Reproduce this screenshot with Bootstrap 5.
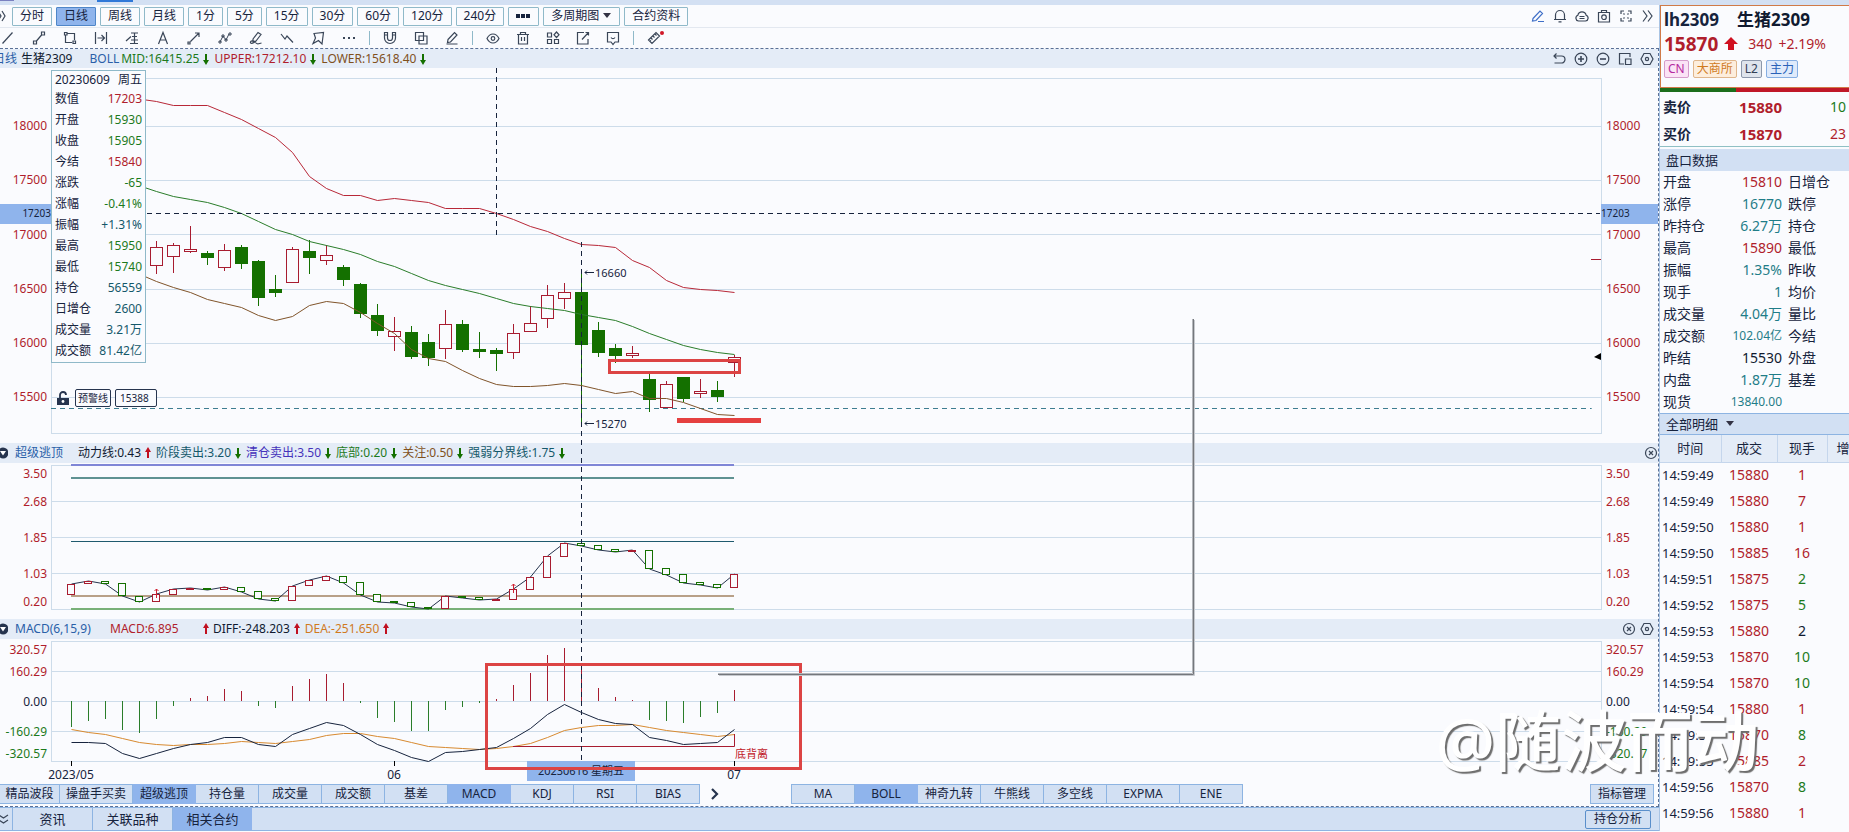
<!DOCTYPE html>
<html lang="zh-CN">
<head>
<meta charset="utf-8">
<meta name="viewport" content="width=device-width, initial-scale=1">
<title>生猪2309 日线</title>
<link href="https://cdn.jsdelivr.net/npm/bootstrap@5.3.0/dist/css/bootstrap.min.css" rel="stylesheet">
<style>
:root{--up:#b01e2c;--down:#1c7a1c;--teal:#1f7d88;--ink:#16233d;--edge:#8db4e2;--pale:#d2e0f3;--sel:#8fb4ec;--bar:#e4ecf7}
body{font-family:"Noto Sans","Noto Sans CJK SC",sans-serif;font-size:12px;line-height:16px;background:#fafbfe;color:var(--ink);overflow:hidden}
button{font-size:inherit;line-height:inherit;color:inherit;background:none;border:0;padding:0;white-space:nowrap}
svg{display:block;flex:none}
.ico{width:14px;height:14px;fill:none;stroke:#3a4658;stroke-width:1.2;overflow:visible}
.c-up{color:var(--up)}.c-down{color:var(--down)}.c-teal{color:var(--teal)}.c-blue{color:#2a5fa8}
.c-brown{color:#80501c}.c-violet{color:#4433bb}.c-deep{color:#14586a}.c-orange{color:#d07a1e}.c-ink{color:#101a30}
.topstrip{height:5px;background:#d3e0f3}
.topstrip i{width:36px;height:2px;background:#2f78d8}
.topstrip i:first-child{width:14px;height:1px;margin-right:83px;background:#7a80c0}
.periods{height:23px;border-bottom:1px solid #e3e8f0}
.period{height:19px;border:1px solid #8fb9c9;border-radius:1px;padding:0 7px}
.period.on{background:var(--sel);border-color:#4f86c8}
.tools{height:20px;padding-left:1px}
.tools .split{width:1px;height:14px;background:#8fb9c9;margin:0 13px}
.g31{gap:17px}.g30{gap:16px}
.work{border:1px dashed #5a7096;border-left:0;padding-bottom:2px}
.infobar{height:20px;background:var(--bar);white-space:nowrap}
.work>.infobar:first-child{height:19px}
.infobar .item{display:flex;align-items:center;gap:4px;margin-right:5px}
.infobar .arrow{width:6px;height:12px}
.infobar .icons{gap:8px}
.head1{overflow:hidden}
.head1 .freq{margin-left:-7px;margin-right:4px}
.head1 .symbol{margin-right:17px}
.head1 .study{margin-right:2px}
.wname{margin-left:7px;margin-right:15px}
.wname.wide{width:80px}
.macdval{width:93px}
.fold{width:8px;height:12px;overflow:hidden}
.p-main{height:375px}.p-esc{height:156px}.p-macd{height:145px}
.plot{width:100%}
.plot text{font-size:12px}
.overlay{position:absolute;left:0;top:0;width:100%;height:100%;pointer-events:none}
.tip{position:absolute;left:51px;top:21px;width:95px;background:#fafbfe;border:1px solid #8fb9c9;padding:0 3px 1px}
.tip .day{height:17px}
.tip dl{margin:0}
.tip dl div{height:21px}
.tip dt{font-weight:400}.tip dd{margin:0}
.alarm{position:absolute;left:57px;top:340px;height:18px;gap:4px;font-size:10px;line-height:14px}
.alarm button,.alarm input{height:18px;border:1px solid #26344e;border-radius:2px;background:#fafbfe;color:var(--ink)}
.alarm button{width:36px}
.alarm input{width:42px;padding:0 4px;font-size:10px}
.tabs{height:20px}
.tab{height:20px;width:63px;background:var(--pale);border:1px solid var(--edge);border-left:0}
.tab.first{border-left:1px solid var(--edge);width:64px}
.tab.on{background:var(--sel);border-color:var(--sel)}
.tab.w60{width:60px}.tab.w73{width:73px}
.tab.manage{width:64px;border-left:1px solid var(--edge);margin-right:4px}
.pager{width:91px;padding-left:11px}
.dock{height:24px;background:var(--pale);border-top:1px solid var(--edge);border-bottom:1px solid var(--edge);font-size:13px}
.dock .dtab{width:80px;height:22px;border-left:1px solid var(--edge)}
.dock .dtab.on{background:var(--sel)}
.dock .analyse{font-size:12px;height:19px;width:66px;border:1px solid #5a8fcb;border-radius:2px;margin-right:8px}
.chevs{width:12px}
.quote{width:190px;border-left:1px solid #a9c4e4;overflow:hidden;flex:none;font-size:14px;line-height:20px}
.card-q{border:1px solid #d07a48;border-right:0;height:83px;padding:3px 0 0 3px}
.name{font-size:17px;line-height:22px;font-weight:700;gap:18px}
.last{gap:6px;height:26px}
.last b{font-size:19px;line-height:24px}
.tags{gap:4px;padding-top:3px}
.tagx{font-size:12px;line-height:16px;height:18px;border:1px solid;border-radius:2px;padding:0 3px}
.t1{color:#b52aa0;background:#fbe3f6;border-color:#d59ccb}.t2{color:#d07a1e;background:#fdeedd;border-color:#dfb68c}
.t3{color:#334056;background:#dfe4ec;border-color:#8c97aa}.t4{color:#2a62b8;background:#dfeafb;border-color:#86aee2}
.ratio{height:4px;background:#c01828}
.ratio div{height:4px;background:#1c6e1c}
.ask{height:27px;padding:0 3px}
.ask b{flex:none}
.ask .px{width:91px;text-align:right;font-size:15px}
.asks{border-bottom:1px solid #8fc0c4;padding-top:1px;height:55px;margin-bottom:2px}
.sect{height:22px;background:var(--pale);font-size:13px;padding-left:6px}
.sect.lined{border-top:1px solid var(--edge);border-bottom:1px solid var(--edge)}
.facts{width:100%;table-layout:fixed}
.facts td,.facts th{height:22px;padding:0;font-weight:400;white-space:nowrap}
.facts tr>*:nth-child(1){width:58px;padding-left:3px}
.facts tr>*:nth-child(2){width:64px;text-align:right}
.facts tr>*:nth-child(3){padding-left:6px}
.sm12{font-size:12px}
.ticks{width:100%;table-layout:fixed}
.ticks .ct{width:61px}.ticks .cp{width:56px}.ticks .cv{width:50px}
.ticks th{height:27px;background:var(--bar);font-weight:400;font-size:13px;text-align:center;padding:0;border-right:1px solid #c5d6ec;border-bottom:1px solid #c5d6ec}
.ticks th:last-child{text-align:left;padding-left:9px;border-right:0}
.ticks td{height:26px;padding:0;text-align:center}
.ticks td:first-child{text-align:left;padding-left:2px;font-size:13px}
.stamp{position:absolute;right:90px;bottom:54px;font-size:66px;line-height:76px;font-weight:500;color:#fff;text-shadow:2px 2px 1px #6d6d6d;pointer-events:none;white-space:nowrap}
</style>
</head>
<body>
<div class="position-relative min-vh-100">
<div class="topstrip d-flex"><i></i><i></i></div>
<div class="d-flex">
<main class="flex-grow-1 overflow-hidden">
  <div class="periods d-flex align-items-center">
    <svg class="ico chevs" viewBox="0 0 12 14"><path d="M-2 2l3 5-3 5M2 2l3 5-3 5"/></svg>
    <div class="d-flex gap-1">
      <button class="period">分时</button><button class="period on">日线</button><button class="period">周线</button><button class="period">月线</button><button class="period">1分</button><button class="period">5分</button><button class="period">15分</button><button class="period">30分</button><button class="period">60分</button><button class="period">120分</button><button class="period">240分</button>
      <button class="period d-flex align-items-center" aria-label="更多周期"><svg width="15" height="4"><path d="M0 0h4v4h-4zM5 0h4v4h-4zM10 0h4v4h-4z" fill="#16233d"/></svg></button>
      <button class="period d-flex align-items-center">多周期图<svg class="ms-1" width="9" height="6"><path d="M0 0h8l-4 5z" fill="#334"/></svg></button>
      <button class="period">合约资料</button>
    </div>
    <div class="d-flex ms-auto gap-2 pe-1">
      <button aria-label="编辑"><svg class="ico" style="stroke:#3f6fc8" viewBox="0 0 14 14"><path d="M2 9.500L9 2l2.500 2.500L5 11.500l-3.500.5zM7 12.500h6"/></svg></button>
      <button aria-label="提醒"><svg class="ico" viewBox="0 0 14 14"><path d="M1 10.500h12M2.500 10.500V6a4.500 4.500 0 0 1 9 0v4.500M5.500 12.800h3"/></svg></button>
      <button aria-label="云"><svg class="ico" viewBox="0 0 14 14"><path d="M3.500 12a3 3 0 0 1-.6-5.800 4.200 4.200 0 0 1 8.200 0A3 3 0 0 1 10.500 12zM4.500 7.500h5M4.500 9.500h5"/></svg></button>
      <button aria-label="截图"><svg class="ico" viewBox="0 0 14 14"><path d="M1.500 3.500h11v9.500h-11zM4.500 3.500v-2h5v2"/><circle cx="7" cy="8.200" r="2.300"/></svg></button>
      <button aria-label="全屏"><svg class="ico" viewBox="0 0 14 14"><path d="M2 5V2h3M9 2h3v3M12 9v3H9M5 12H2V9M4.500 4.500l1 1M9.500 4.500l-1 1M4.500 9.500l1-1M9.500 9.500l-1-1"/></svg></button>
      <button aria-label="展开"><svg class="ico" viewBox="0 0 14 14"><path d="M2 1.500l4 5.500-4 5.500M7 1.500l4 5.500-4 5.500"/></svg></button>
    </div>
  </div>
  <div class="tools d-flex align-items-center">
    <div class="d-flex g31">
      <button aria-label="直线"><svg class="ico" viewBox="0 0 14 14"><path d="M1.500 12.500l10-11"/></svg></button>
      <button aria-label="线段"><svg class="ico" viewBox="0 0 14 14"><path d="M4 10.500l6-7M1.500 10h3v3h-3zM9.500 1h3v3h-3z"/></svg></button>
      <button aria-label="矩形"><svg class="ico" viewBox="0 0 14 14"><path d="M4.500 2.500h7V9M2.500 4.500v7H9M1.500 1.500h2.500v2.500H1.500zM10 10h2.500v2.500H10z"/></svg></button>
      <button aria-label="测距"><svg class="ico" viewBox="0 0 14 14"><path d="M1.500 1v12M12.500 1v12M3.500 7h7M7.500 4l3 3-3 3"/></svg></button>
      <button aria-label="黄金分割"><svg class="ico" viewBox="0 0 14 14"><path d="M6 2h7M7 5.500h5M6 9h7M5 12.500h8M9.500 2v10.500M1 10l5-4.500"/></svg></button>
      <button aria-label="文字"><svg class="ico" viewBox="0 0 14 14"><path d="M2.500 13L7 1.500 11.500 13M4 9h6"/></svg></button>
      <button aria-label="射线"><svg class="ico" viewBox="0 0 14 14"><path d="M3.500 10.500L12 2M8 2h4v4M1 11h2v2H1z"/></svg></button>
      <button aria-label="折线"><svg class="ico" viewBox="0 0 14 14"><path d="M2 11l3-6 3 4 3-6M1 10h2v2H1zM4 4h2v2H4zM7 8h2v2H7zM11 2h2v2h-2z" stroke-width="1"/></svg></button>
      <button aria-label="画笔"><svg class="ico" viewBox="0 0 14 14"><path d="M4 8l5-6.500 3 2L7 10l-3 .5zM7 10c-3 3-6 3-5.500 1s4-1 5.500 1 3 .5 5.500 0"/></svg></button>
      <button aria-label="波浪"><svg class="ico" viewBox="0 0 14 14"><path d="M1 3l4 5 2-3 6 6.500"/></svg></button>
      <button aria-label="形态"><svg class="ico" viewBox="0 0 14 14"><path d="M3 2.500L12.500 1.500 11 13 7.500 9.500 2 12.500 4.500 7z"/></svg></button>
      <button aria-label="更多"><svg class="ico" viewBox="0 0 14 14"><path stroke-width="2" d="M1 7h2M6 7h2M11 7h2"/></svg></button>
    </div>
    <span class="split"></span>
    <div class="d-flex g31">
      <button aria-label="磁吸"><svg class="ico" viewBox="0 0 14 14"><path d="M1.500 1.500h3V7a2.500 2.500 0 0 0 5 0V1.500h3V7a5.500 5.500 0 0 1-11 0zM1.500 4h3M9.500 4h3"/></svg></button>
      <button aria-label="复制"><svg class="ico" viewBox="0 0 14 14"><path d="M1.500 1.500h8v8h-8zM5 5h8v8H5z"/></svg></button>
      <button aria-label="铅笔"><svg class="ico" viewBox="0 0 14 14"><path d="M3 8.500L9.500 1.500l2.500 2.500-6.500 7-3 .5zM1.500 13h11"/></svg></button>
    </div>
    <span class="split"></span>
    <div class="d-flex g30">
      <button aria-label="显示"><svg class="ico" viewBox="0 0 14 14"><path d="M1 7.500c3-6 9-6 12 0-3 6-9 6-12 0z"/><circle cx="7" cy="7.500" r="1.800"/></svg></button>
      <button aria-label="删除"><svg class="ico" viewBox="0 0 14 14"><path d="M1 3.500h12M4.500 3.500v-2h5v2M2.500 3.500V13h9V3.500M5.500 6v4M8.500 6v4"/></svg></button>
      <button aria-label="组件"><svg class="ico" viewBox="0 0 14 14"><path d="M1.500 2h4v4h-4zM1.500 8.500h4v4h-4zM8.500 8.500h4v4h-4zM10.500 1l2.500 2.800-2.500 2.700L8 3.800z"/></svg></button>
      <button aria-label="导出"><svg class="ico" viewBox="0 0 14 14"><path d="M8 1.500H1.500V13H12V8M6 8.500l6-6.500M9.500 1.500h3v3"/></svg></button>
      <button aria-label="消息"><svg class="ico" viewBox="0 0 14 14"><path d="M1.500 1.500h11V11H9l-2 2.500L5 11H1.500zM5 6.500c1 1.500 3 1.500 4 0"/></svg></button>
    </div>
    <span class="split"></span>
    <button aria-label="测量"><svg class="ico" viewBox="0 0 14 14"><path d="M1.500 9L9 1.500l3.500 3.500L5 12.500zM4 7l1.500 1.500M6 5l1.500 1.500M8 3l1.500 1.500M3 9.500l1 1"/><circle cx="15" cy="2" r="2" fill="#d01828" stroke="none"/></svg></button>
  </div>

  <section class="work position-relative" aria-label="行情图">
    <div class="infobar head1 d-flex align-items-center">
      <span class="freq c-blue">日线</span><span class="symbol c-ink">生猪2309</span><span class="study c-blue">BOLL</span>
      <span class="item c-down" data-arrow="down">MID:16415.25</span><span class="item c-up" data-arrow="down">UPPER:17212.10</span><span class="item c-brown" data-arrow="down">LOWER:15618.40</span>
      <div class="icons d-flex ms-auto pe-1">
        <button aria-label="撤销"><svg class="ico" viewBox="0 0 14 14"><path d="M4.500 1.500L2 4l2.500 2.500M2 4h7.500a3.500 3.500 0 0 1 0 7H2.500"/></svg></button>
        <button aria-label="放大"><svg class="ico" viewBox="0 0 14 14"><circle cx="7" cy="7" r="5.800"/><path stroke-width="1.600" d="M4 7h6M7 4v6"/></svg></button>
        <button aria-label="缩小"><svg class="ico" viewBox="0 0 14 14"><circle cx="7" cy="7" r="5.800"/><path stroke-width="1.600" d="M4 7h6"/></svg></button>
        <button aria-label="画中画"><svg class="ico" viewBox="0 0 14 14"><path d="M12 5V1.500H1.500V12H6M7.500 7H13v5.500H7.500z"/></svg></button>
        <button aria-label="设置"><svg class="ico" viewBox="0 0 14 14"><path d="M4 1.500h6L13 7l-3 5.500H4L1 7z"/><circle cx="7" cy="7" r="1.600"/></svg></button>
      </div>
    </div>
    <svg class="plot p-main" id="main"></svg>

    <div class="infobar d-flex align-items-center">
      <svg class="fold" viewBox="0 0 8 12"><circle cx="3" cy="6" r="5.500" fill="#26344e"/><path d="M0 4h6L3 8.500z" fill="#fff"/></svg>
      <span class="wname c-blue">超级逃顶</span>
      <span class="item c-ink" data-arrow="up">动力线:0.43</span><span class="item c-deep" data-arrow="down">阶段卖出:3.20</span><span class="item c-violet" data-arrow="down">清仓卖出:3.50</span><span class="item c-down" data-arrow="down">底部:0.20</span><span class="item c-brown" data-arrow="down">关注:0.50</span><span class="item c-deep" data-arrow="down">强弱分界线:1.75</span>
      <button class="ms-auto" aria-label="关闭超级逃顶"><svg class="ico" viewBox="0 0 14 14"><circle cx="7" cy="7" r="5.500"/><path d="M5 5l4 4M9 5l-4 4"/></svg></button>
    </div>
    <svg class="plot p-esc" id="esc"></svg>

    <div class="infobar d-flex align-items-center">
      <svg class="fold" viewBox="0 0 8 12"><circle cx="3" cy="6" r="5.500" fill="#26344e"/><path d="M0 4h6L3 8.500z" fill="#fff"/></svg>
      <span class="wname wide c-blue">MACD(6,15,9)</span>
      <span class="macdval c-up">MACD:6.895</span><span class="item c-ink" data-arrow="up" data-lead="1">DIFF:-248.203</span><span class="item c-orange" data-arrow="up">DEA:-251.650</span>
      <div class="d-flex ms-auto gap-1 pe-1">
        <button aria-label="关闭MACD"><svg class="ico" viewBox="0 0 14 14"><circle cx="7" cy="7" r="5.500"/><path d="M5 5l4 4M9 5l-4 4"/></svg></button>
        <button aria-label="MACD设置"><svg class="ico" viewBox="0 0 14 14"><path d="M4 1.500h6L13 7l-3 5.500H4L1 7z"/><circle cx="7" cy="7" r="1.600"/></svg></button>
      </div>
    </div>
    <svg class="plot p-macd" id="macd"></svg>

    <div class="tabs d-flex align-items-center">
      <button class="tab w60">精品波段</button><button class="tab w73">操盘手买卖</button><button class="tab on">超级逃顶</button><button class="tab">持仓量</button><button class="tab">成交量</button><button class="tab">成交额</button><button class="tab">基差</button><button class="tab on">MACD</button><button class="tab">KDJ</button><button class="tab">RSI</button><button class="tab">BIAS</button>
      <button class="pager" aria-label="下一页"><svg width="8" height="12"><path d="M1 1l5 5-5 5" fill="none" stroke="#26344e" stroke-width="2.200"/></svg></button>
      <button class="tab first">MA</button><button class="tab on">BOLL</button><button class="tab">神奇九转</button><button class="tab">牛熊线</button><button class="tab">多空线</button><button class="tab w73">EXPMA</button><button class="tab">ENE</button>
      <button class="tab manage ms-auto">指标管理</button>
    </div>

    <div class="tip">
      <div class="day d-flex justify-content-between align-items-center"><span>20230609</span><span>周五</span></div>
      <dl id="tip"></dl>
    </div>
    <div class="alarm d-flex align-items-center">
      <svg width="14" height="15" viewBox="0 0 14 15"><path d="M0 7h12v7H0z" fill="#26344e"/><path d="M3 7V4a3 3 0 0 1 6 0" fill="none" stroke="#26344e" stroke-width="1.800"/><circle cx="6" cy="10.500" r="1.400" fill="#fff"/></svg>
      <button>预警线</button><input type="text" value="15388" aria-label="预警价">
    </div>
    <svg class="overlay">
      <path d="M581.500 193V712" stroke="#16233d" stroke-dasharray="5 4"/>
      <g fill="none" stroke="#dc4444" stroke-width="3">
        <rect x="609.500" y="311.500" width="130" height="12"/>
        <rect x="486.500" y="615.500" width="314" height="104"/>
        <path d="M677 371.500h84" stroke="#e54040" stroke-width="5"/>
      </g>
      <g fill="none">
        <path d="M719 626.500h475.500V271" stroke="#c6c9ce"/>
        <path d="M718 625.500h475.500V270" stroke="#74777c"/>
        <path d="M718 624.500h474.500V270" stroke="#b4b7bc"/>
      </g>
    </svg>
  </section>

  <div class="dock d-flex align-items-center">
    <svg class="ico chevs" viewBox="0 0 12 14"><path d="M-1 3l4.500 3L8 3M-1 8l4.500 3L8 8"/></svg>
    <button class="dtab">资讯</button><button class="dtab">关联品种</button><button class="dtab on">相关合约</button>
    <button class="analyse ms-auto">持仓分析</button>
  </div>
</main>

<aside class="quote">
  <div class="card-q">
    <div class="name d-flex"><span>lh2309</span><span class="c-ink text-nowrap">生猪2309</span></div>
    <div class="last d-flex align-items-center c-up"><b>15870</b><svg width="14" height="14"><path d="M7 0l7 7h-4v6H4V7H0z" fill="#d01020"/></svg><span class="ms-1">340</span><span>+2.19%</span></div>
    <div class="tags d-flex"><span class="tagx t1">CN</span><span class="tagx t2">大商所</span><span class="tagx t3">L2</span><span class="tagx t4">主力</span></div>
  </div>
  <div class="ratio"><div style="width:40%"></div></div>
  <div class="asks">
    <div class="ask d-flex align-items-center"><b>卖价</b><b class="px c-up">15880</b><span class="ms-auto c-down">10</span></div>
    <div class="ask d-flex align-items-center"><b>买价</b><b class="px c-up">15870</b><span class="ms-auto c-up">23</span></div>
  </div>
  <div class="sect d-flex align-items-center">盘口数据</div>
  <table class="facts"><tbody id="facts"></tbody></table>
  <div class="sect lined d-flex align-items-center">全部明细<svg class="ms-2" width="9" height="6"><path d="M0 0h8l-4 5z" fill="#334"/></svg></div>
  <table class="ticks"><colgroup><col class="ct"><col class="cp"><col class="cv"><col></colgroup>
    <thead><tr><th>时间</th><th>成交</th><th>现手</th><th>增</th></tr></thead><tbody id="ticks"></tbody></table>
</aside>
</div>
<div class="stamp">@随波而动</div>
</div>

<script src="https://cdn.jsdelivr.net/npm/bootstrap@5.3.0/dist/js/bootstrap.bundle.min.js"></script>
<script>
const UP='#a81c30', DN='#147000', GRID='#cddcea', INK='#16233d';
const X=k=>71.5+17*k;
const poly=(pts,c)=>`<polyline fill="none" stroke="${c}" points="${pts.map(p=>p.join()).join(' ')}"/>`;
const text=(x,y,s,c,anchor='start',size=12)=>`<text x="${x}" y="${y+size/3}" fill="${c}" text-anchor="${anchor}" style="font-size:${size}px">${s}</text>`;
/* Nested svg pinned to the right edge: negative x counts back from the panel's end. */
const right=s=>`<svg x="100%" overflow="visible">${s}</svg>`;
/* The frame and grid follow the panel's width; 56px on the right hold the axis. */
function frame(rows,top,bottom,labels){
  let s=`<svg x="0" y="0" width="100%" height="100%">`;
  rows.concat(top,bottom).forEach(y=>s+=`<rect x="51" y="${y}" width="100%" height="1" fill="${GRID}"/>`);
  s+=`<rect x="51" y="${top}" width="1" height="${bottom-top}" fill="${GRID}"/></svg>`;
  s+=right(`<rect x="-56" y="0" width="56" height="100%" fill="#fafbfe"/><rect x="-57" y="${top}" width="1" height="${bottom-top}" fill="${GRID}"/>`+labels.map(l=>text(-52,l[0],l[1],l[2])).join(''));
  return s+labels.map(l=>text(47,l[0],l[1],l[2],'end')).join('');
}
const R='#b01e2c',G='#1c7a1c';

/* Main panel: candles are [rising, high, body top, body bottom, low], first one at slot 5. */
const candles=[[1,173,179,198,206],[1,175,177,189,205],[1,158,181,184,185],[0,183,185,190,197],[1,176,182,200,203],[0,177,179,196,201],[0,192,193,230,238],[0,207,221,225,229],[1,179,181,215,215],[0,172,183,190,206],[1,177,187,193,197],[0,197,199,212,218],[0,215,216,246,250],[0,236,247,263,268],[1,249,263,269,283],[0,258,264,289,291],[0,266,274,290,298],[1,242,256,281,291],[0,252,256,282,284],[0,264,281,284,290],[0,280,282,286,303],[1,256,265,285,291],[1,238,255,264,264],[1,217,227,251,260],[1,215,224,231,241],[0,204,224,277,356],[0,254,262,285,289],[0,276,280,288,295],[1,278,285,288,290],[0,305,311,332,344],[1,313,316,340,340],[0,309,309,331,334],[1,311,323,326,330],[0,313,322,329,334],[1,287,289,295,309]];
const upper=[33,37,37,37,44,51,60,69,84,108,120,127,127,132,130,132,134,140,140,140,145,151,158,163,170,176,177,179,192,199,212,219,221,222,224];
const mid=[123,128,131,134,139,145,153,161,166,173,177,181,186,193,198,205,212,217,221,225,230,235,238,240,242,246,249,252,258,265,271,277,281,284,286];
const lower=[213,219,224,231,235,239,247,252,248,237,233,235,244,255,265,281,290,293,302,310,316,318,318,317,315,317,321,325,323,330,330,334,340,346,347];
let m=frame([58,112,166,221,275,329],10,365,[[58,'18000',R],[112,'17500',R],[167,'17000',R],[221,'16500',R],[275,'16000',R],[329,'15500',R]]);
m+=`<line x1="51" x2="96%" y1="340.5" y2="340.5" stroke="#3d7d90" stroke-dasharray="5 4"/>`;
candles.forEach((c,i)=>{const x=X(i+5),[u,h,t,b,l]=c;
  m+=u?`<path d="M${x} ${h}V${t}M${x} ${b}V${l}" stroke="${UP}"/><rect x="${x-6}" y="${t+.5}" width="12" height="${Math.max(b-t-1,2)}" fill="#fafbfe" stroke="${UP}"/>`
     :`<path d="M${x} ${h}V${l}" stroke="${DN}"/><rect x="${x-6.5}" y="${t}" width="13" height="${b-t}" fill="${DN}"/>`;});
[[upper,32,'#b82838'],[mid,120,'#2a7d2a'],[lower,209,'#80542a']].forEach(([v,s,c])=>m+=poly([[146,s],...v.map((y,i)=>[X(i+5),y+.5])],c));
m+=`<path d="M496.500 0V171" stroke="${INK}" stroke-dasharray="5 4"/>`;
m+=`<line x1="147" x2="96.500%" y1="145.500" y2="145.500" stroke="${INK}" stroke-dasharray="5 4"/>`;
m+=`<rect y="136" width="51" height="20" fill="#8fb4ec"/>`+text(51,146,'17203',INK,'end',10);
m+=right(`<rect x="-57" y="136" width="57" height="20" fill="#8fb4ec"/>`+text(-57,146,'17203',INK,'start',10)+`<path d="M-67 191.500h10" stroke="${UP}"/><path d="M-64 289l7-4v7z"/>`);
[[204,'16660'],[355,'15270']].forEach(([y,s])=>m+=`<path d="M594 ${y}.5h-9m2-2l-2 2 2 2" fill="none" stroke="${INK}"/>`+text(595,y+1,s,INK,'start',11));
document.getElementById('main').innerHTML=m;

/* Escape-top panel: [rising, top, bottom]; the line joins the closing ends. */
const boxes=[[1,121,132],[1,118,121],[0,118,121],[0,120,133],[0,133,139],[1,131,139],[1,126,132],[1,125,127],[0,125,127],[1,124,127],[0,124,129],[0,128,136],[0,135,138],[1,123,138],[1,117,123],[1,113,118],[0,113,120],[0,119,132],[0,131,139],[0,138,140],[0,139,144],[0,144,146],[1,133,146],[0,133,135],[0,134,137],[1,136,138],[1,126,137],[1,114,127],[1,93,115],[1,80,94],[0,80,83],[0,82,87],[0,86,89],[1,87,89],[0,87,106],[0,105,112],[0,111,120],[0,119,122],[0,121,125],[1,111,125]];
let e=frame([38,74,110],2,146,[[11,'3.50',R],[39,'2.68',R],[75,'1.85',R],[111,'1.03',R],[139,'0.20',R]]);
[[1,'#7f86d6',2],[14,'#5f9292',2],[78,'#1f5a6e',1],[132,'#b8a088',2],[145,'#78b078',2]].forEach(([y,c,h])=>e+=`<rect x="71" y="${y}" width="663" height="${h}" fill="${c}"/>`);
e+=poly(boxes.map(([u,t,b],i)=>[X(i),u?t:b]),'#26344e');
boxes.forEach(([u,t,b],i)=>e+=`<rect x="${X(i)-4}" y="${t+.5}" width="7" height="${Math.max(b-t-1,1)}" fill="#fafbfe" stroke="${u?UP:DN}"/>`);
[[5,126],[26,121]].forEach(([k,y])=>e+=`<path d="M${X(k)} ${y}v9m-2-7l2-2 2 2" fill="none" stroke="#d02030"/>`);
document.getElementById('esc').innerHTML=e;

/* MACD panel: the zero line is at 62. */
const hist=[88,82,80,91,94,80,67,59,57,50,52,67,69,47,40,35,44,64,79,83,92,92,71,68,64,60,46,34,16,9,30,49,58,61,81,82,84,78,74,51];
const diff=[103,103,104,114,119,114,109,105,103,98,98,105,107,95,89,83,86,95,105,111,118,122,113,112,110,108,99,89,75,65,73,80,84,85,98,101,105,104,103,90];
const dea=[90,93,95,99,103,105,106,105,105,104,102,103,104,102,100,96,94,94,97,99,103,107,108,109,110,109,107,104,98,91,88,86,86,85,88,91,93,95,97,95];
let d=frame([32,62,92],2,122,[[11,'320.57',R],[33,'160.29',R],[63,'0.00',INK],[93,'-160.29',G],[115,'-320.57',G]]);
hist.forEach((y,i)=>d+=`<path d="M${X(i)} 62V${y}" stroke="${y<62?UP:'#2a7d2a'}"/>`);
d+=poly(dea.map((y,i)=>[X(i),y+.5]),'#d88a30')+poly(diff.map((y,i)=>[X(i),y+.5]),INK);
d+=`<path d="M513 107.500H734.500V95" fill="none" stroke="${UP}"/>`+text(735,115,'底背离','#c01828','start',11);
d+=`<rect x="527" y="122" width="108" height="20" fill="#8fb4ec"/>`+text(581,132,'20230616 星期五',INK,'middle',11);
[[71,'2023/05'],[394,'06'],[734,'07']].forEach(([x,s])=>d+=`<path d="M${x+.5} 122v5" stroke="#000"/>`+text(x,136,s,INK,'middle'));
document.getElementById('macd').innerHTML=d;

/* Trend arrows beside the indicator readings. */
const arrow=dir=>`<svg class="arrow" viewBox="0 0 6 12"><path fill="${dir=='up'?'#c01020':'#147000'}" d="${dir=='up'?'M3 0l3 5H4v6H2V5H0z':'M3 12L0 7h2V1h2v6h2z'}"/></svg>`;
document.querySelectorAll('[data-arrow]').forEach(n=>{const a=arrow(n.dataset.arrow);if(n.dataset.lead)n.insertAdjacentHTML('afterbegin',a);n.insertAdjacentHTML('beforeend',a);});

const C={u:'c-up',d:'c-down',t:'c-teal',k:'c-ink',p:'c-deep'};
document.getElementById('tip').innerHTML=[['数值','17203','u'],['开盘','15930','d'],['收盘','15905','d'],['今结','15840','u'],['涨跌','-65','d'],['涨幅','-0.41%','d'],['振幅','+1.31%','p'],['最高','15950','d'],['最低','15740','d'],['持仓','56559','p'],['日增仓','2600','p'],['成交量','3.21万','p'],['成交额','81.42亿','p']].map(r=>`<div class="d-flex justify-content-between align-items-center"><dt>${r[0]}</dt><dd class="${C[r[2]]}">${r[1]}</dd></div>`).join('');
document.getElementById('facts').innerHTML=[['开盘','15810','u','日增仓'],['涨停','16770','t','跌停'],['昨持仓','6.27万','t','持仓'],['最高','15890','u','最低'],['振幅','1.35%','t','昨收'],['现手','1','t','均价'],['成交量','4.04万','t','量比'],['成交额','102.04亿','t','今结'],['昨结','15530','k','外盘'],['内盘','1.87万','t','基差'],['现货','13840.00','t','']].map(r=>`<tr><th>${r[0]}</th><td class="${C[r[2]]} ${r[1].length>6?'sm12':''}">${r[1]}</td><th>${r[3]}</th></tr>`).join('');
document.getElementById('ticks').innerHTML=['49 15880 1 u','49 15880 7 u','50 15880 1 u','50 15885 16 u','51 15875 2 d','52 15875 5 d','53 15880 2 k','53 15870 10 d','54 15870 10 d','54 15880 1 u','55 15870 8 d','55 15885 2 u','56 15870 8 d','56 15880 1 u'].map(s=>{const[t,p,v,c]=s.split(' ');return`<tr><td>14:59:${t}</td><td class="c-up">${p}</td><td class="${C[c]}">${v}</td><td></td></tr>`}).join('');
</script>
</body>
</html>
